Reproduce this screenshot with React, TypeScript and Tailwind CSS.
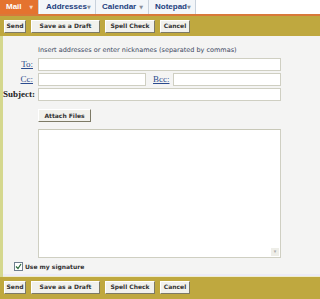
import React from "react";

const btn =
  "h-[13px] flex items-center justify-center whitespace-nowrap bg-[#f1f1ec] border border-t-white border-l-white border-r-[#7d7a66] border-b-[#7d7a66] text-[6px] font-bold text-[#333] leading-none";

function Toolbar() {
  return (
    <div className="h-[20px] bg-[#bfa83f] flex items-center gap-[5px] pl-[4px] shrink-0">
      <div className={`${btn} w-[22px]`}>Send</div>
      <div className={`${btn} w-[69px]`}>Save as a Draft</div>
      <div className={`${btn} w-[50px]`}>Spell Check</div>
      <div className={`${btn} w-[30px]`}>Cancel</div>
    </div>
  );
}

function Tab({ label, active, w }: { label: string; active?: boolean; w: string }) {
  return (
    <div
      className={`${w} h-full flex items-center justify-between pl-[6px] pr-[5px] border-r border-[#c9d2dc] ${
        active ? "bg-[#e4732f] text-white" : "bg-[#f3f6f9] text-[#22407e]"
      }`}
    >
      <span
        className="text-[8px] font-bold leading-none whitespace-nowrap"
        style={{ fontFamily: '"Liberation Sans", Arial, sans-serif' }}
      >
        {label}
      </span>
      <span className={`text-[5px] leading-none ${active ? "text-[#fbd6bd]" : "text-[#8a8f99]"}`}>▼</span>
    </div>
  );
}

export default function App() {
  return (
    <div
      className="w-[320px] h-[299px] flex flex-col bg-white overflow-hidden"
      style={{ fontFamily: '"DejaVu Sans", Verdana, sans-serif' }}
    >
      <div className="h-[14px] flex shrink-0 bg-white">
        <Tab label="Mail" active w="w-[39px]" />
        <div className="w-[1px]" />
        <Tab label="Addresses" w="w-[56px]" />
        <Tab label="Calendar" w="w-[53px]" />
        <Tab label="Notepad" w="w-[47px]" />
      </div>
      <div className="h-[2px] bg-[#d8793a] shrink-0" />
      <Toolbar />
      <div className="flex-1 bg-[#f4f4f3] border-l-[3px] border-[#d5d88e] flex flex-col pt-[11px]">
        <div className="pl-[35px] text-[6.5px] text-[#3a4660] leading-none h-[8px] whitespace-nowrap">
          Insert addresses or enter nicknames (separated by commas)
        </div>
        <div
          className="flex flex-col gap-[2px] mt-[3px]"
          style={{ fontFamily: '"Liberation Serif", "Times New Roman", serif' }}
        >
          <div className="flex items-center h-[13px]">
            <span className="w-[32px] text-right pr-[2px] text-[9px] text-[#2b4b8e] underline">To:</span>
            <div className="ml-[3px] w-[243px] h-[13px] bg-white border border-[#cfcfc2]" />
          </div>
          <div className="flex items-center h-[13px]">
            <span className="w-[32px] text-right pr-[2px] text-[9px] text-[#2b4b8e] underline">Cc:</span>
            <div className="ml-[3px] w-[108px] h-[13px] bg-white border border-[#cfcfc2]" />
            <span className="ml-[7px] w-[18px] text-[9px] text-[#2b4b8e] underline">Bcc:</span>
            <div className="ml-[2px] w-[108px] h-[13px] bg-white border border-[#cfcfc2]" />
          </div>
          <div className="flex items-center h-[13px]">
            <span className="w-[32px] text-right pr-[1px] text-[9px] font-bold text-[#222] whitespace-nowrap">
              Subject:
            </span>
            <div className="ml-[3px] w-[243px] h-[13px] bg-white border border-[#cfcfc2]" />
          </div>
        </div>
        <div className="pl-[35px] mt-[8px]">
          <div className={`${btn} w-[53px]`}>Attach Files</div>
        </div>
        <div className="ml-[35px] mt-[7px] w-[243px] h-[129px] bg-white border border-[#cfcfc2] border-t-[#c8c8b8] relative">
          <div className="absolute right-[1px] bottom-[1px] w-[8px] h-[8px] bg-[#eeeee8] text-[5px] text-[#aaa] flex items-center justify-center">
            ▾
          </div>
        </div>
        <div className="flex items-center pl-[11px] mt-[4px] gap-[2px]">
          <div className="w-[9px] h-[9px] bg-white border border-[#6f7f8f] flex items-center justify-center">
            <svg width="7" height="7" viewBox="0 0 7 7">
              <path d="M1 3.5 L3 5.5 L6 1" stroke="#2a6a3a" strokeWidth="1.2" fill="none" />
            </svg>
          </div>
          <span className="text-[6px] font-bold text-[#333] whitespace-nowrap">Use my signature</span>
        </div>
        <div className="flex-1" />
        <div className="h-[2px] bg-[#ecebf7]" />
        <div className="h-[1px] bg-[#eeeccf]" />
      </div>
      <Toolbar />
      <div className="h-[2px] bg-[#bfa83f] shrink-0" />
    </div>
  );
}
